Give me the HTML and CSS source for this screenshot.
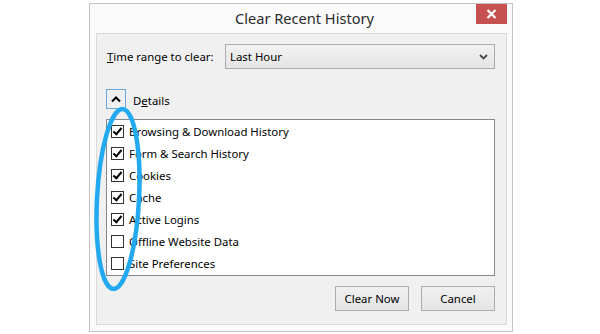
FILE: index.html
```html
<!DOCTYPE html>
<html lang="en">
<head>
    <meta charset="UTF-8">
    <meta name="viewport" content="width=device-width, initial-scale=1.0">
    <title>Clear Recent History</title>
    <link rel="stylesheet" href="styles.css">
</head>
<body>
    <div id="window">
        <div id="titleBar">
            <span id="title">Clear Recent History</span>
            <span id="closeButton">
                <svg width="11" height="10" viewBox="0 0 11 10"><path d="M1.5 1 L9.5 9 M9.5 1 L1.5 9" stroke="#fff" stroke-width="2.2" fill="none"/></svg>
            </span>
        </div>
        <div id="content">
            <div class="rangeRow">
                <span class="rangeLabel"><u>T</u>ime range to clear:</span>
                <div class="selectBox">
                    <span>Last Hour</span>
                    <svg width="9" height="6" viewBox="0 0 9 6"><path d="M1 1 L4.5 4.5 L8 1" stroke="#4a4a4a" stroke-width="1.8" fill="none"/></svg>
                </div>
            </div>
            <div class="detailsRow">
                <span class="toggleButton">
                    <svg width="10" height="7" viewBox="0 0 10 7"><path d="M1 5.5 L5 1.5 L9 5.5" stroke="#000" stroke-width="2" fill="none"/></svg>
                </span>
                <span class="detailsLabel">D<u>e</u>tails</span>
            </div>
            <div class="itemList">
                <div class="item"><span class="checkBox checked"></span>Browsing &amp; Download History</div>
                <div class="item"><span class="checkBox checked"></span>Form &amp; Search History</div>
                <div class="item"><span class="checkBox checked"></span>Cookies</div>
                <div class="item"><span class="checkBox checked"></span>Cache</div>
                <div class="item"><span class="checkBox checked"></span>Active Logins</div>
                <div class="item"><span class="checkBox"></span>Offline Website Data</div>
                <div class="item"><span class="checkBox"></span>Site Preferences</div>
            </div>
            <div class="buttonRow">
                <span class="dialogButton">Clear Now</span>
                <span class="dialogButton">Cancel</span>
            </div>
        </div>
    </div>
    <!-- highlight drawn over the checkboxes -->
    <svg id="highlight" width="70" height="200" viewBox="0 0 70 200">
        <ellipse cx="28" cy="99" rx="21" ry="90" transform="rotate(3 28 99)" stroke="#22a9ef" stroke-width="4.5" fill="none"/>
    </svg>
</body>
</html>
```

FILE: styles.css
```css
body {
    margin: 0;
    padding: 3px 0 0 89px;
    background-color: #ffffff;
    font-family: "Noto Sans", "Open Sans", sans-serif;
    font-size: 11.4px;
    color: #000000;
}
#window {
    width: 424px;
    height: 329px;
    box-sizing: border-box;
    border: 1px solid #c3c3c3;
    background-color: #fafafa;
    padding: 0 5px 6px 6px;
    display: flex;
    flex-direction: column;
}
#titleBar {
    height: 29px;
    flex-shrink: 0;
    display: flex;
    justify-content: center;
    align-items: center;
    position: relative;
}
#title {
    font-size: 14.6px;
    color: #2b2b2b;
    margin: 0 0 2px 6px;
}
#closeButton {
    position: absolute;
    right: 0;
    top: 0;
    width: 31px;
    height: 20px;
    background-color: #c75050;
    display: flex;
    align-items: center;
    justify-content: center;
}
#content {
    flex: 1;
    background-color: #f0f0f0;
    border: 1px solid #d9d9d9;
    padding: 10px 11px 0 9px;
    display: flex;
    flex-direction: column;
}
.rangeRow {
    display: flex;
    align-items: center;
    height: 25px;
}
.rangeLabel {
    width: 118px;
    padding-left: 1px;
}
.selectBox {
    flex: 1;
    height: 25px;
    box-sizing: border-box;
    border: 1px solid #acacac;
    background: linear-gradient(#f2f2f2, #e5e5e5);
    display: flex;
    align-items: center;
    justify-content: space-between;
    padding: 0 6px 0 4px;
}
.detailsRow {
    display: flex;
    align-items: center;
    gap: 7px;
    margin-top: 20px;
    height: 20px;
}
.detailsLabel {
    margin-top: 2px;
}
.toggleButton {
    width: 20px;
    height: 20px;
    box-sizing: border-box;
    border: 1px solid #6aa6e0;
    display: flex;
    align-items: center;
    justify-content: center;
}
.itemList {
    margin-top: 10px;
    height: 157px;
    box-sizing: border-box;
    border: 1px solid #828790;
    background-color: #ffffff;
    padding: 0 0 0 4px;
}
.item {
    height: 22px;
    display: flex;
    align-items: center;
    gap: 5px;
}
.checkBox {
    width: 13px;
    height: 13px;
    box-sizing: border-box;
    border: 1px solid #333333;
    background-color: #ffffff;
    position: relative;
}
.checkBox.checked::after {
    content: "";
    position: absolute;
    left: 3px;
    top: 0px;
    width: 3px;
    height: 7px;
    border: solid #000000;
    border-width: 0 2px 2px 0;
    transform: rotate(40deg);
}
.buttonRow {
    display: flex;
    justify-content: flex-end;
    gap: 12px;
    margin-top: 10px;
}
.dialogButton {
    width: 74px;
    height: 25px;
    box-sizing: border-box;
    border: 1px solid #acacac;
    background: linear-gradient(#f0f0f0, #e5e5e5);
    display: flex;
    align-items: center;
    justify-content: center;
}
#highlight {
    position: absolute;
    left: 90px;
    top: 100px;
}
```
